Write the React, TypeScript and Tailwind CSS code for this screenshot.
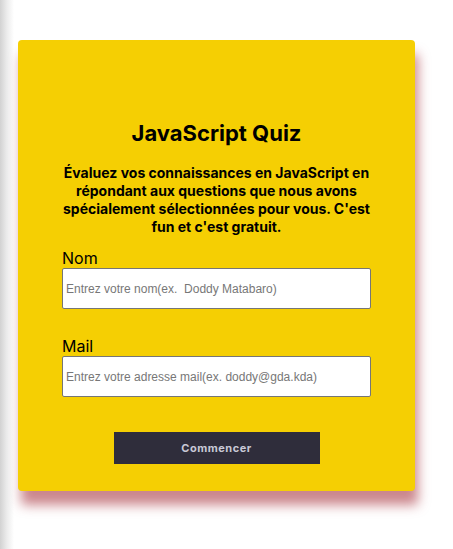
import React from "react";

export default function App() {
  return (
    <div className="flex min-h-[549px] w-full bg-white" style={{ fontFamily: "Inter, 'Liberation Sans', sans-serif" }}>
      <div className="w-[14px] shrink-0 bg-gradient-to-r from-[#d2d2d2] via-[#ececec] to-white" />
      <div className="pl-[4px] pt-[40px]">
        <div className="flex h-[451px] w-[397px] flex-col items-center rounded-[4px] bg-[#f5cf03] pt-[78px] shadow-[3px_14px_12px_rgba(175,70,80,0.65)]">
          <h1 className="text-[22px] font-bold leading-[30px] text-black">JavaScript Quiz</h1>
          <p className="mt-[16px] w-[326px] text-center text-[14px] font-bold leading-[18px] text-black">
            Évaluez vos connaissances en JavaScript en répondant aux questions que nous avons spécialement sélectionnées pour vous. C'est fun et c'est gratuit.
          </p>
          <form className="mt-[12px] flex w-[309px] flex-col" onSubmit={(e) => e.preventDefault()}>
            <label className="text-[16px] leading-[20px] text-black">Nom</label>
            <input
              className="h-[41px] w-full rounded-[2px] border border-[#767676] bg-white px-[3px] text-[12px] text-black placeholder:text-[#777777]"
              style={{ fontFamily: "'Liberation Sans', Arial, sans-serif" }}
              placeholder="Entrez votre nom(ex.  Doddy Matabaro)"
            />
            <label className="mt-[27px] text-[16px] leading-[20px] text-black">Mail</label>
            <input
              className="h-[41px] w-full rounded-[2px] border border-[#767676] bg-white px-[3px] text-[12px] text-black placeholder:text-[#777777]"
              style={{ fontFamily: "'Liberation Sans', Arial, sans-serif" }}
              placeholder="Entrez votre adresse mail(ex. doddy@gda.kda)"
            />
            <div className="mt-[35px] flex justify-center">
              <button
                type="submit"
                className="h-[32px] w-[206px] bg-[#2f2d3b] text-[11px] font-bold tracking-[0.5px] text-[#c9c9d6]"
              >
                Commencer
              </button>
            </div>
          </form>
        </div>
      </div>
    </div>
  );
}
